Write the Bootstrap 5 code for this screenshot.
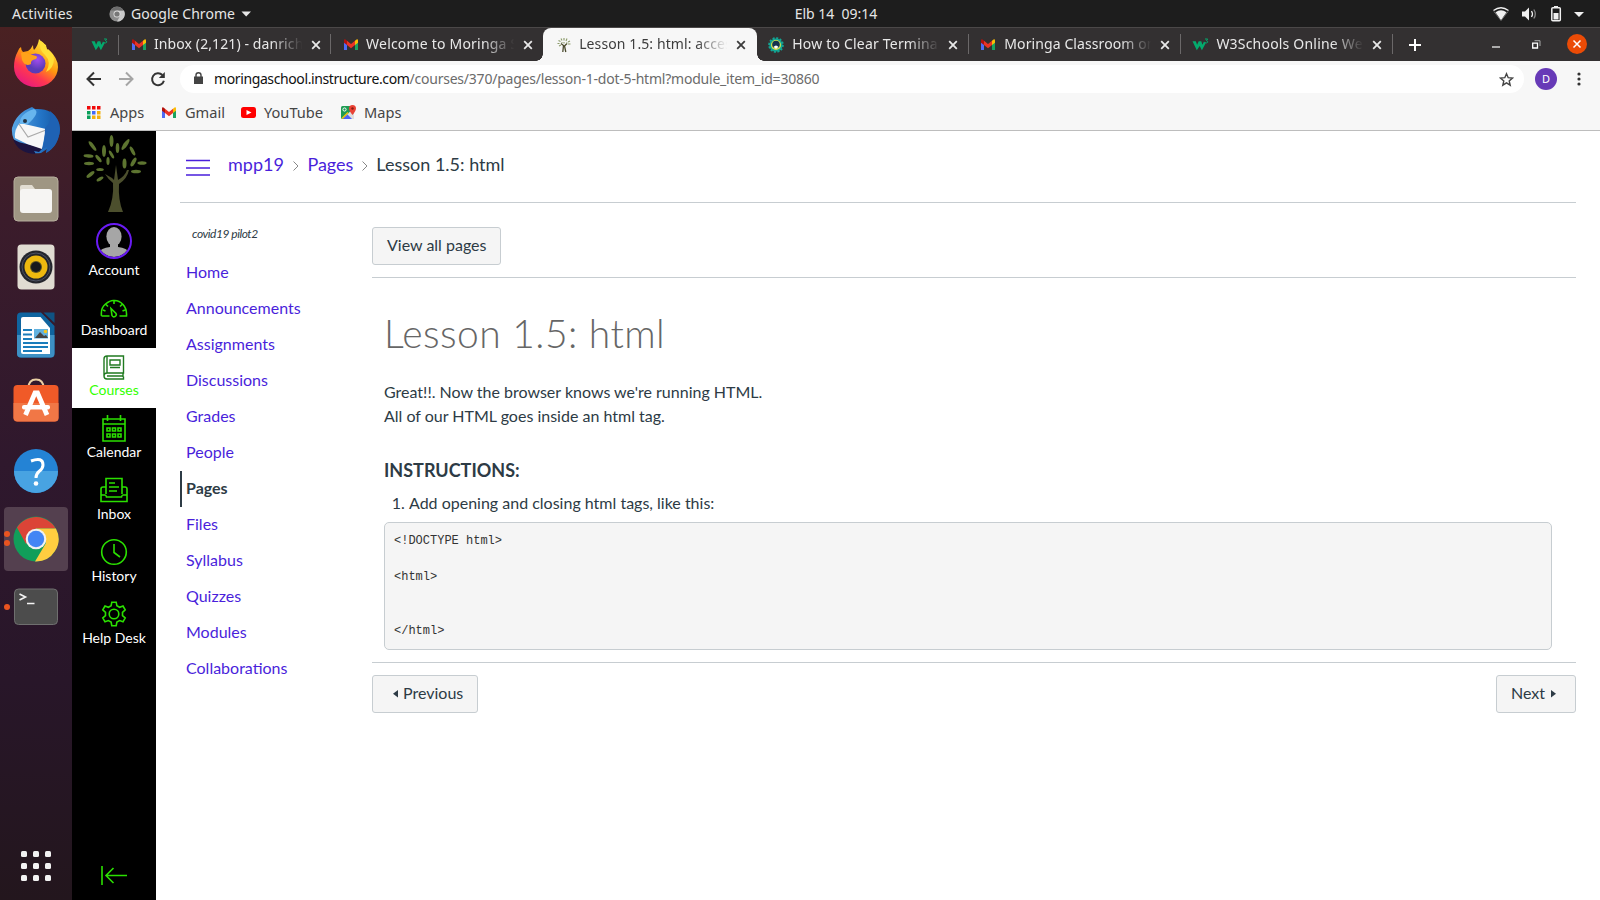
<!DOCTYPE html>
<html lang="en">
<head>
<meta charset="utf-8">
<meta name="viewport" content="width=device-width, initial-scale=1">
<title>Lesson 1.5: html</title>
<link href="https://cdn.jsdelivr.net/npm/bootstrap@5.3.0/dist/css/bootstrap.min.css" rel="stylesheet">
<style>
html,body{height:900px;overflow:hidden}
body{font-family:Lato,"Noto Sans",sans-serif;font-size:16px;color:#2d3b45;line-height:24px}
svg{display:block;flex:none}
a{text-decoration:none;color:#4a1fdb}
.shell{font-family:"Noto Sans","Open Sans",sans-serif;font-size:14px;white-space:nowrap}
.topbar{height:27px;background:#1d1d1d;color:#e6e6e6;padding:0 8px 0 12px}
.topbar>div{flex:1 1 0}
.topbar .clock{white-space:pre;flex:0 0 auto;margin-left:68px}
.dock{width:72px;background:linear-gradient(#4a2122,#3b1c2b 22%,#2f182d 50%,#281629 75%,#23161d);padding-top:2px}
.dock-item{height:68px;position:relative}
.dock-item.on::before{content:"";position:absolute;inset:2px 4px;border-radius:4px;background:#54404f}
.dock-item svg{position:relative}
.pip{position:absolute;left:4px;width:6px;height:6px;border-radius:50%;background:#e95420}
.tabstrip{height:34px;background:#333031;border-top:1px solid #4b4848;color:#e8e8e8}
.pinned{width:47px;padding-left:19px}
.sep{border-right:1px solid #6b6869;height:20px}
.btab{width:212.1px;padding-left:12px;height:33px;position:relative}
.btab .sep{position:absolute;right:0;top:6px}
.btab .ttl{width:150px;margin-left:7px;padding-bottom:2px;letter-spacing:.1px;-webkit-mask-image:linear-gradient(90deg,#000 78%,transparent 99%);mask-image:linear-gradient(90deg,#000 78%,transparent 99%)}
.btab svg.x{margin-left:7px}
.btab.active{background:#f7f7f7;color:#3c3c3c;border-radius:8px 8px 0 0;width:214px;padding-left:13px}
.btab.active::before,.btab.active::after{content:"";position:absolute;bottom:0;width:7px;height:7px}
.btab.active::before{left:-7px;background:radial-gradient(circle at 0 0,transparent 6.5px,#f7f7f7 7px)}
.btab.active::after{right:-7px;background:radial-gradient(circle at 100% 0,transparent 6.5px,#f7f7f7 7px)}
.toolbar{height:36px;background:#f7f7f7;padding-left:13px}
.toolbar .tb{width:32px}
.omni{width:1344px;height:28px;border-radius:14px;background:#fff;color:#6b6b6b;padding-left:14px;padding-right:10px;margin-left:-1px;letter-spacing:-.22px}
.omni b{font-weight:400;color:#111;letter-spacing:-.39px}
.avatar{width:22px;height:22px;border-radius:50%;background:#673ab7;color:#fff;font-size:11px;margin-left:11px}
.marks{height:34px;background:#f7f7f7;border-bottom:1px solid #bdbdbd;padding-left:15px;color:#454545;padding-bottom:3px;font-size:14.6px}
.marks div{gap:9px}
.gnav{width:84px;background:#000;color:#fff;font-size:14px;line-height:17px}
.gnav a{color:#fff}
.gnav a.sel{background:#fff;color:#3f0}
.gnav .g{fill:none;stroke:#2be000;stroke-width:1.6}
.crumbs{height:72px;border-bottom:1px solid #c7cdd1;font-size:18px;padding-left:6px}
.page{padding:0 24px}
.side{width:192px}
.side .term{font-size:12px;font-style:italic;letter-spacing:-.46px;padding-left:12px;height:52px;padding-top:19px}
.side a{display:block;height:36px;line-height:34px;padding-left:4px;border-left:2px solid transparent}
.side a.here{color:#2d3b45;font-weight:700;border-color:#2d3b45}
.cbtn{height:38px;border:1px solid #c7cdd1;border-radius:3px;background:#f5f5f5;color:#2d3b45;padding:0 14px 2px;line-height:24px}
.viewbar{padding:24px 0 12px;border-bottom:1px solid #c7cdd1}
.lesson{padding:0 24px 12px 12px;height:385px;border-bottom:1px solid #c7cdd1}
.lesson h1{font-size:39px;letter-spacing:.45px;font-weight:300;line-height:46px;margin:0;padding-top:32px;color:#666;height:102px}
.lesson h2{font-size:18px;font-weight:700;line-height:27px;margin:0}
.lesson ol{margin:0;padding-left:25px}
.lesson pre{font-family:"Liberation Mono",monospace;font-size:12px;line-height:18px;background:#f5f5f5;border:1px solid #c7cdd1;border-radius:5px;padding:9px;height:128px;margin:7px 0 0;color:#333}
</style>
</head>
<body>
<svg width="0" height="0" class="position-absolute">
<defs>
<symbol id="gm" viewBox="0 0 16 12"><path d="M1 11.500V3l3 2.300v6.200z" fill="#4f6bf5"/><path d="M12 11.500V5.300L15 3v8.500z" fill="#1aa260"/><path d="M12 2.200 13.500 1Q15 .3 15 2v2.200l-3 2.300z" fill="#fbbc04"/><path d="M1 4.200V2Q1 .3 2.500 1L4 2.200v4.300z" fill="#b3110c"/><path d="M4 2.200 8 5.400l4-3.200v4.300L8 9.700 4 6.500z" fill="#ea3326"/></symbol>
<symbol id="xx" viewBox="0 0 10 10"><path d="M1.200 1.200l7.600 7.600M8.800 1.200L1.200 8.800" stroke="currentColor" stroke-width="1.800" fill="none"/></symbol>
<symbol id="w3" viewBox="0 0 17 14"><path d="M.5 3.200h3.300l1.300 3.600 1.600-3.600h2.600l1.100 3.600L12 3.500l1.800 1.500-3.900 7.300-2.200-4.200-2.900 4.200z" fill="#04aa6d"/><path d="M13 1h2.700l-1.300 1.600q1.900.4 1.200 1.800-.8 1-2.500.2" fill="none" stroke="#04aa6d"/></symbol>
</defs>
</svg>

<div class="topbar shell d-flex align-items-center">
  <div class="d-flex align-items-center">
    <span style="width:97px;letter-spacing:.25px">Activities</span>
    <svg width="16" height="16" viewBox="0 0 16 16"><circle cx="8" cy="8" r="7.600" fill="#8d8d8d"/><path d="M8 4.500h7A7.600 7.600 0 0 1 8 15.600L11.300 9.500z" fill="#c9c9c9"/><path d="M1.500 4.500A7.600 7.600 0 0 1 14.600 4.500H8z" fill="#6d6d6d"/><circle cx="8" cy="8" r="3.500" fill="#ddd"/><circle cx="8" cy="8" r="2.600" fill="#777"/></svg>
    <span style="width:110px;margin-left:6px;letter-spacing:.05px">Google Chrome</span>
    <svg width="11" height="6"><path d="M.5.500h9.500L5.200 5.500z" fill="#e6e6e6"/></svg>
  </div>
  <div class="clock">Elb 14  09:14</div>
  <div class="d-flex justify-content-end align-items-center">
    <svg width="100" height="18" viewBox="0 0 100 18"><g fill="#f0f0f0"><path d="M3.500 7.200Q9 3.500 14.500 7.200L9 15.300z"/><path d="M1.500 5.500Q9 0 16.500 5.500" fill="none" stroke="#f0f0f0" stroke-width="1.300"/><path d="M2 6.500L9 15.500 16 6.500" fill="none" stroke="#888" stroke-width=".8"/><path d="M30 6.500h3l4-4v13l-4-4h-3z"/><path d="M39.500 6q2 3 0 6" fill="none" stroke="#f0f0f0" stroke-width="1.300"/><path d="M41.800 4.500q3 4.500 0 9" fill="none" stroke="#888" stroke-width="1.300"/><path d="M62 1h4v2h-4z"/><rect x="59.800" y="2.800" width="8.500" height="13" rx="1" fill="none" stroke="#f0f0f0" stroke-width="1.500"/><path d="M61.500 8h5v6.500h-5z"/><path d="M82 7h10l-5 5z"/></g></svg>
  </div>
</div>

<div class="d-flex" style="height:873px">
  <aside class="dock d-flex flex-column flex-shrink-0">
    <div class="dock-item d-flex align-items-center justify-content-center"><svg width="46" height="48" viewBox="0 0 46 48"><defs><linearGradient id="ff" x1=".8" y1="0" x2=".2" y2="1"><stop offset=".1" stop-color="#ffe83f"/><stop offset=".45" stop-color="#ff980e"/><stop offset=".7" stop-color="#ff3750"/><stop offset="1" stop-color="#e21587"/></linearGradient><radialGradient id="fp" cx=".6" cy=".3"><stop offset="0" stop-color="#a34dee"/><stop offset="1" stop-color="#5b3bb8"/></radialGradient></defs><path d="M5 12q1-3 3-4 0 3 2 5l5-1q3-2 5-6 0 4 1 5 4-4 5-11 3 4 7 6l1 6q1 0 1-2 10 9 10 18a22 20 0 0 1-44 0q0-9 4-16z" fill="url(#ff)"/><circle cx="22.500" cy="24.500" r="10" fill="url(#fp)"/><path d="M8 14q4-2 8 1l7 2q2 1 0 3-6 1-5 5-6 3-9-4z" fill="#ffa21a"/><path d="M28 2q-3 8 4 14 7 7 1 17 8-4 8-13-1-7-7-10-2-6-6-8z" fill="#ffdf37"/></svg></div>
    <div class="dock-item d-flex align-items-center justify-content-center"><svg width="50" height="50" viewBox="0 0 50 50"><defs><linearGradient id="tb"><stop offset="0" stop-color="#5aa7e5"/><stop offset=".6" stop-color="#2374c6"/><stop offset="1" stop-color="#1556a0"/></linearGradient></defs><path d="M21 1l3 2Q42 2 47 15q4 9 0 17-2 9-12 15l1-4-6 4q-14 2-22-7Q0 33 1 22 5 7 21 1z" fill="url(#tb)"/><path d="M2 33q6 4 14 5l16 4-4 4-5-1q2 2 1 3Q7 47 2 33z" fill="#1c1440"/><path d="M4 32q-1-9 5-15l26 6-4 20-15-5z" fill="#f7f7f7"/><path d="M8 18l9 13 18-7" fill="none" stroke="#aaa" stroke-width="1.200"/><path d="M9 18Q8 8 23 3q7 3-6 15z" fill="#67b5ee"/><circle cx="14" cy="15" r="2" fill="#234"/><path d="M34 22q8-7 5-17 10 8 10 18-1 17-14 24l1-6q-4 1-5 3 3-9 3-22z" fill="#1e62b4"/></svg></div>
    <div class="dock-item d-flex align-items-center justify-content-center"><svg width="46" height="46"><rect x="1" y="1" width="44" height="44" rx="4" fill="#9f9683" stroke="#b6ae9d"/><path d="M7 16V11q0-2 2-2h10l3 4h12v8z" fill="#e2ddd2"/><rect x="7" y="13" width="32" height="24" rx="3" fill="#f6f5f3"/></svg></div>
    <div class="dock-item d-flex align-items-center justify-content-center"><svg width="38" height="46"><rect x=".5" y=".5" width="37" height="45" rx="4" fill="#e0dcd2"/><circle cx="19" cy="23" r="16.500" fill="#24262c"/><circle cx="19" cy="23" r="14" fill="none" stroke="#4c5262"/><circle cx="19" cy="23" r="11.500" fill="#edb90f"/><circle cx="19" cy="23" r="6" fill="#5a5323"/><circle cx="19" cy="23" r="5" fill="#17191d"/></svg></div>
    <div class="dock-item d-flex align-items-center justify-content-center"><svg width="38" height="46"><path d="M4 .500h20L37.500 14v28q0 3.500-4 3.500H4q-4 0-4-4v-37q0-4 4-4z" fill="#0f649f"/><path d="M0 23h37.500v18q0 4.500-4 4.500H4q-4 0-4-4z" fill="#3d90c4"/><path d="M26.500.500h11V11z" fill="#0f5383"/><path d="M6 5h17.500L33 16v26H6q-2 0-2-2V7q0-2 2-2z" fill="#fff"/><path d="M6 18h9M6 22.500h9M6 27h9M6 31h25M6 35h25M6 39h19" stroke="#1b7dbb" stroke-width="2"/><path d="M17 17h14v9.500H17z" fill="#62b2df"/><path d="M18 26l5-6 4 4 2-1 2 3z" fill="#444"/><circle cx="28.500" cy="19.500" r="1.800" fill="#f6c51d"/></svg></div>
    <div class="dock-item d-flex align-items-center justify-content-center"><svg width="46" height="46" style="margin-top:-4px"><path d="M15.500 10q0-8.500 7.500-8.500T30.500 10" fill="none" stroke="#eacfa4" stroke-width="2"/><rect x=".5" y="7" width="45" height="36.500" rx="4" fill="#f05a28"/><path d="M.500 25h45v15q0 3.500-4 3.500h-37q-4 0-4-4z" fill="#f17746"/><path d="M12.500 37L22 15h2.500l9.500 22" fill="none" stroke="#fff" stroke-width="4.800"/><rect x="9" y="27" width="28" height="4.500" rx="2" fill="#fff"/></svg></div>
    <div class="dock-item d-flex align-items-center justify-content-center"><svg width="46" height="46"><circle cx="23" cy="23" r="22" fill="#2483d5"/><path d="M1 23h44a22 22 0 0 1-44 0z" fill="#48a3e2"/><path d="M18 13q12-4.500 12 4 0 3.500-4 6.500-3 2.500-3 6.500" fill="none" stroke="#fff" stroke-width="3"/><circle cx="23" cy="35.500" r="2.300" fill="#fff"/></svg></div>
    <div class="dock-item on d-flex align-items-center justify-content-center"><i class="pip" style="top:26px"></i><i class="pip" style="top:35px"></i><svg width="46" height="46" viewBox="0 0 46 46"><circle cx="23" cy="23" r="22.500" fill="#119e5a"/><path d="M4 11.500A22.500 22.500 0 0 1 42.600 12.500H23L13 28z" fill="#db4437"/><path d="M23 12.500h19.900A22.500 22.500 0 0 1 22 45.500L33 27z" fill="#ffcd40"/><circle cx="23" cy="23" r="10.300" fill="#f1f1f1"/><circle cx="23" cy="23" r="8.200" fill="#4285f4"/></svg></div>
    <div class="dock-item d-flex align-items-center justify-content-center"><i class="pip" style="top:31px"></i><svg width="46" height="38"><rect x="1.500" y="1" width="43" height="35.500" rx="4" fill="#4c4c4c" stroke="#6f6f6f"/><path d="M6.500 6l6 3-6 3M14 15.500h7.500" fill="none" stroke="#f4f4f4" stroke-width="1.600"/></svg></div>
    <div class="mt-auto d-flex justify-content-center" style="padding-bottom:18px"><svg width="32" height="32" fill="#f2f2f2"><g id="dots3"><rect x="1" y="1" width="6" height="6" rx="1.500"/><rect x="13" y="1" width="6" height="6" rx="1.500"/><rect x="25" y="1" width="6" height="6" rx="1.500"/></g><use href="#dots3" y="12"/><use href="#dots3" y="24"/></svg></div>
  </aside>

  <div class="flex-grow-1 d-flex flex-column" style="min-width:0">
    <div class="tabstrip shell d-flex align-items-center">
      <div class="pinned d-flex align-items-center justify-content-between"><svg width="17" height="14"><use href="#w3"/></svg><i class="sep"></i></div>
      <div class="btab d-flex align-items-center"><svg width="16" height="13"><use href="#gm"/></svg><span class="ttl">Inbox (2,121) - danrich</span><svg class="x" width="10" height="10"><use href="#xx"/></svg><i class="sep"></i></div>
      <div class="btab d-flex align-items-center"><svg width="16" height="13"><use href="#gm"/></svg><span class="ttl" style="letter-spacing:.2px">Welcome to Moringa S</span><svg class="x" width="10" height="10"><use href="#xx"/></svg></div>
      <div class="btab active d-flex align-items-center"><svg width="16" height="16" viewBox="0 0 16 16"><path d="M6.800 15l.7-6.500L5 6.500M9.800 15L8.500 9 11 6.500" stroke="#4a4a2c" stroke-width="1.300" fill="none"/><path d="M1.500 6.500h2M2.500 3.500l2 1M5 1.500l1 2M8 1v2.500M11 1.500L10 4M14 4l-2 1M14.500 7h-2.500M3 9l2-1M8 5v1.500M5.500 5.500h1M10 6h1.500" stroke="#8a9a68" stroke-width="1.100"/></svg><span class="ttl">Lesson 1.5: html: acces</span><svg class="x" width="10" height="10"><use href="#xx"/></svg></div>
      <div class="btab d-flex align-items-center" style="padding-left:11px"><svg width="16" height="16"><circle cx="8" cy="8" r="6.600" fill="#12a594" stroke="#12a594" stroke-width="2.400" stroke-dasharray="2 1.450"/><circle cx="8" cy="8" r="5" fill="#d7e04e"/><circle cx="8" cy="7.500" r="3.800" fill="#15324f"/><path d="M5.500 10q2.500-3 5 0L8 12z" fill="#fff"/></svg><span class="ttl" style="margin-left:8px;width:149px;letter-spacing:.2px">How to Clear Termina</span><svg class="x" width="10" height="10"><use href="#xx"/></svg><i class="sep"></i></div>
      <div class="btab d-flex align-items-center" style="padding-left:11px"><svg width="16" height="13"><use href="#gm"/></svg><span class="ttl" style="margin-left:8px;width:149px">Moringa Classroom on</span><svg class="x" width="10" height="10"><use href="#xx"/></svg><i class="sep"></i></div>
      <div class="btab d-flex align-items-center" style="padding-left:11px"><svg width="17" height="14"><use href="#w3"/></svg><span class="ttl" style="width:149px;letter-spacing:.2px">W3Schools Online We</span><svg class="x" width="10" height="10"><use href="#xx"/></svg><i class="sep"></i></div>
      <svg width="12" height="12" style="margin-left:16px"><path d="M6 0v12M0 6h12" stroke="#fff" stroke-width="2"/></svg>
      <div class="ms-auto d-flex align-items-center" style="padding-right:13px">
        <svg width="8" height="8"><path d="M0 6h8" stroke="#fff" stroke-width="1.200"/></svg>
        <svg width="9" height="9" style="margin:0 26px 0 32px"><path d="M.7 3.200h4.800V8H.7z" fill="none" stroke="#fff" stroke-width="1.300"/><path d="M2.500.700H8V6" fill="none" stroke="#aaa"/></svg>
        <svg width="20" height="20" style="margin-top:-1px"><circle cx="10" cy="10" r="10" fill="#eb4b06"/><path d="M6.500 6.500l7 7M13.500 6.500l-7 7" stroke="#fff" stroke-width="1.500"/></svg>
      </div>
    </div>
    <div class="toolbar shell d-flex align-items-center">
      <div class="tb"><svg width="18" height="16"><path d="M16 8H3M9 1.500L2.500 8 9 14.500" fill="none" stroke="#333" stroke-width="2"/></svg></div>
      <div class="tb"><svg width="18" height="16"><path d="M2 8h13M9 1.500L15.500 8 9 14.500" fill="none" stroke="#a5a5a5" stroke-width="2"/></svg></div>
      <div class="tb"><svg width="18" height="16"><path d="M13.400 4A6 6 0 1 0 14.900 9.800" fill="none" stroke="#333" stroke-width="2"/><path d="M15.800 1v6h-6z" fill="#333"/></svg></div>
      <div class="omni d-flex align-items-center">
        <svg width="9" height="12" style="margin-top:-2px"><path d="M0 4.500h9V12H0z" fill="#444"/><path d="M2 5V3q0-2.300 2.500-2.300T7 3v2" fill="none" stroke="#444" stroke-width="1.400"/></svg>
        <span style="margin-left:11px"><b>moringaschool.instructure.com</b><span>/courses/370/pages/lesson-1-dot-5-html?module_item_id=30860</span></span>
        <svg class="ms-auto" width="15" height="15" viewBox="0 0 15 15"><path d="M7.500 1.700l1.700 4 4.300.4-3.300 2.800 1 4.300-3.700-2.300-3.700 2.300 1-4.300L1.500 6.100l4.300-.4z" fill="none" stroke="#444" stroke-width="1.400"/></svg>
      </div>
      <div class="avatar d-flex align-items-center justify-content-center">D</div>
      <svg width="4" height="14" style="margin-left:20px" fill="#333"><circle cx="2" cy="2" r="1.600"/><circle cx="2" cy="7" r="1.600"/><circle cx="2" cy="12" r="1.600"/></svg>
    </div>
    <div class="marks shell d-flex align-items-center">
      <div class="d-flex align-items-center" style="width:75px"><svg width="14" height="13"><path d="M0 0h3.500v3.500H0zM5 0h3.500v3.500H5zM10 0h3.500v3.500H10z" fill="#f00a0a"/><path d="M0 5h3.500v3.500H0zM0 9.500h3.500V13H0z" fill="#0a9f5a"/><path d="M5 5h3.500v3.500H5z" fill="#4169f5"/><path d="M10 5h3.500v3.500H10zM5 9.500h3.500V13H5zM10 9.500h3.500V13H10z" fill="#f2b10a"/></svg><span>Apps</span></div>
      <div class="d-flex align-items-center" style="width:79px;gap:8px"><svg width="16" height="13" style="margin-left:-1px"><use href="#gm"/></svg><span>Gmail</span></div>
      <div class="d-flex align-items-center" style="width:100px;gap:8px"><svg width="15" height="11"><rect width="15" height="11" rx="2.500" fill="#f00"/><path d="M5.500 3l5 2.500-5 2.500z" fill="#fff"/></svg><span>YouTube</span></div>
      <div class="d-flex align-items-center" style="gap:8px"><svg width="15" height="14"><rect x="0" y="1" width="13" height="13" rx="1.500" fill="#1e9c53"/><path d="M2 14L10 5.500l3 3V14z" fill="#dedede"/><path d="M1.500 14l5-4.500L11 14z" fill="#4d62f5"/><path d="M7 7.500l-6 6" stroke="#f4c20d" stroke-width="1.500"/><circle cx="3.500" cy="4.500" r="1.600" fill="none" stroke="#fff"/><path d="M11.500 0a3.500 3.500 0 0 1 3.500 3.500q0 2-3.500 6.500Q8 5.500 8 3.500A3.500 3.500 0 0 1 11.500 0z" fill="#ea4335"/><circle cx="11.500" cy="3.500" r="1.200" fill="#8a1c12"/></svg><span>Maps</span></div>
    </div>

    <div class="d-flex flex-grow-1 bg-white">
      <nav class="gnav d-flex flex-column flex-shrink-0 text-center">
        <div style="padding:4px 0 0 11px;height:92px"><svg width="66" height="78" viewBox="0 0 66 78"><path d="M25 77q6-13 5-29-5-4-8-9l7 4 2 2 2-15 2 15q7-4 9-10h2q-2 9-10 14-1 16 4 28z" fill="#4c4f2d"/><g fill="#5d7430"><ellipse cx="28.500" cy="6" rx="2" ry="6"/><ellipse cx="9.500" cy="11" rx="1.800" ry="6" transform="rotate(-38 9.500 11)"/><ellipse cx="21" cy="16" rx="2" ry="6"/><ellipse cx="34.500" cy="13" rx="1.800" ry="5"/><ellipse cx="42.500" cy="9.500" rx="2" ry="6.500" transform="rotate(35 42.500 9.500)"/><ellipse cx="28.500" cy="19.500" rx="1.500" ry="4.500" transform="rotate(-30 28.500 19.500)"/><ellipse cx="5.500" cy="21" rx="5" ry="1.700" transform="rotate(5 5.500 21)"/><ellipse cx="15.500" cy="23.500" rx="1.700" ry="4.500" transform="rotate(-38 15.500 23.500)"/><ellipse cx="6" cy="28.500" rx="5" ry="1.700"/><ellipse cx="25" cy="26" rx="1.600" ry="4"/><ellipse cx="49.500" cy="16" rx="1.700" ry="5" transform="rotate(-28 49.500 16)"/><ellipse cx="41.500" cy="28.500" rx="2" ry="5"/><ellipse cx="50.500" cy="27" rx="1.900" ry="5" transform="rotate(30 50.500 27)"/><ellipse cx="59" cy="28" rx="4.600" ry="1.800"/><ellipse cx="53" cy="36.500" rx="5" ry="1.800"/><ellipse cx="7.500" cy="39.500" rx="4.800" ry="1.800" transform="rotate(-38 7.500 39.500)"/><ellipse cx="17" cy="34.500" rx="3.800" ry="1.600"/><ellipse cx="17" cy="44" rx="3.800" ry="1.600" transform="rotate(-30 17 44)"/></g></svg></div>
        <a href="#" class="d-flex flex-column align-items-center" style="height:67px"><svg width="36" height="36"><defs><clipPath id="av"><circle cx="18" cy="18" r="16"/></clipPath></defs><g clip-path="url(#av)" fill="#a6a6a6"><ellipse cx="18" cy="13.500" rx="7.600" ry="9.500"/><path d="M14 20h8v4q9 1 12 6v6H2v-6q3-5 12-6z"/></g><circle cx="18" cy="18" r="17" fill="none" stroke="#6a1cf5" stroke-width="2"/></svg><span style="margin-top:2px">Account</span></a>
        <a href="#" class="d-flex flex-column align-items-center" style="height:58px;padding-top:9px"><svg class="g" width="28" height="19"><path d="M1.500 17q-1-8 4-12t8.500-3.500q5-.3 9 4t3.500 11.500h-7M1.500 17h8M14 2v3M6 5.500l2 2M22 5.500l-2 2M3 11l2.500 1M25 11l-2.500 1"/><path d="M11 9.500l5 5q1 2-1 3t-3-1z"/></svg><span style="margin-top:3px">Dashboard</span></a>
        <a href="#" class="sel d-flex flex-column align-items-center" style="height:60px;padding-top:7px"><svg width="22" height="25" fill="none" stroke="#207a20" stroke-width="1.400"><path d="M4 1h16.500v17H4Q1 18 1 21t3 3h16.500v-2.500M1 21V4q0-3 3-3M4 1v17M20 18v4M4 21h16M7 5h10v5H7zM7 12.500h10"/></svg><span style="margin-top:1px">Courses</span></a>
        <a href="#" class="d-flex flex-column align-items-center" style="height:61px;padding-top:7px"><svg class="g" width="24" height="27"><path d="M1 4h22v22H1zM1 9h22M5.500 0v6M18.500 0v6M5 13h3v3H5zM10.500 13h3v3h-3zM16 13h3v3h-3zM5 19h3v3H5zM10.500 19h3v3h-3zM16 19h3v3h-3z"/></svg><span style="margin-top:1px">Calendar</span></a>
        <a href="#" class="d-flex flex-column align-items-center" style="height:62px;padding-top:8px"><svg class="g" width="28" height="26"><path d="M6 17V1.500h16V17M6 10H3q-2 0-2 2v12.500h26V12q0-2-2-2h-3M1 18h4q1 0 1.500 2h15q.5-2 1.500-2h4M9 6h6M9 10h10M9 14h8"/></svg><span style="margin-top:2px">Inbox</span></a>
        <a href="#" class="d-flex flex-column align-items-center" style="height:62px;padding-top:7px"><svg class="g" width="28" height="28"><circle cx="14" cy="14" r="12.300"/><path d="M14 6v8.500l6 4.500"/></svg><span style="margin-top:1px">History</span></a>
        <a href="#" class="d-flex flex-column align-items-center" style="padding-top:8px"><svg class="g" width="26" height="26" viewBox="0 0 26 26"><circle cx="13" cy="13" r="4.800"/><path d="M10.800 1.200h4.400l.7 3.600 2.700 1.500 3.400-1.200 2.200 3.800-2.700 2.400v3.300l2.700 2.400-2.200 3.800-3.400-1.200-2.700 1.500-.7 3.600h-4.400l-.7-3.600-2.700-1.500L4 20.800 1.800 17l2.700-2.400v-3.300L1.800 8.900 4 5.100l3.400 1.200 2.700-1.500z"/></svg><span style="margin-top:2px">Help Desk</span></a>
        <a href="#" class="mt-auto d-flex justify-content-center" style="padding-bottom:15px"><svg class="g" width="26" height="19"><path d="M1 0v19M26 9.500H6M12.500 2L5 9.500l7.500 7.500"/></svg></a>
      </nav>
      <main class="flex-grow-1 page">
        <div class="crumbs d-flex align-items-center">
          <svg width="24" height="17" style="margin:2px 18px 0 0"><path d="M0 1.500h24M0 9h24M0 16h24" stroke="#4a1fdb" stroke-width="1.500"/></svg>
          <div class="d-flex align-items-center" style="margin-top:-6px"><a href="#">mpp19</a><svg width="6" height="10" style="margin:4px 8.500px 0 9px"><path d="M.5.500L5 5 .5 9.500" fill="none" stroke="#888"/></svg><a href="#">Pages</a><svg width="6" height="10" style="margin:4px 8px 0 9px"><path d="M.5.500L5 5 .5 9.500" fill="none" stroke="#888"/></svg><span>Lesson 1.5: html</span></div>
        </div>
        <div class="d-flex">
          <nav class="side flex-shrink-0">
            <div class="term">covid19 pilot2</div>
            <a href="#">Home</a><a href="#">Announcements</a><a href="#">Assignments</a><a href="#">Discussions</a><a href="#">Grades</a><a href="#">People</a><a href="#" class="here">Pages</a><a href="#">Files</a><a href="#">Syllabus</a><a href="#">Quizzes</a><a href="#">Modules</a><a href="#">Collaborations</a>
          </nav>
          <section class="flex-grow-1">
            <div class="viewbar"><button class="cbtn d-block">View all pages</button></div>
            <article class="lesson">
              <h1>Lesson 1.5: html</h1>
              <p class="m-0 pb-4">Great!!. Now the browser knows we're running HTML.<br>All of our HTML goes inside an html tag.</p>
              <h2 style="padding:5px 0 7px">INSTRUCTIONS:</h2>
              <ol><li>Add opening and closing html tags, like this:</li></ol>
<pre>&lt;!DOCTYPE html&gt;

&lt;html&gt;


&lt;/html&gt;</pre>
            </article>
            <div class="d-flex justify-content-between" style="padding-top:12px">
              <button class="cbtn d-flex align-items-center" style="padding-left:20px"><svg width="5" height="8" style="margin:2px 5px 0 0"><path d="M5 0v7.500L0 3.700z" fill="#2d3b45"/></svg>Previous</button>
              <button class="cbtn d-flex align-items-center" style="padding-right:19px">Next<svg width="5" height="8" style="margin:2px 0 0 6px"><path d="M0 0v7.500l5-3.800z" fill="#2d3b45"/></svg></button>
            </div>
          </section>
        </div>
      </main>
    </div>
  </div>
</div>
<script src="https://cdn.jsdelivr.net/npm/bootstrap@5.3.0/dist/js/bootstrap.bundle.min.js"></script>
</body>
</html>
